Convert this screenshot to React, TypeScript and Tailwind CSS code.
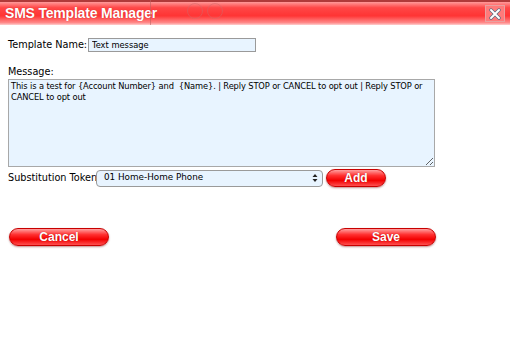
import { useState } from 'react'

function RedButton({ label, className = '' }: { label: string; className?: string }) {
  return (
    <button
      className={`h-[18px] rounded-full border border-[#c80000] text-white text-[12px] font-bold leading-none shadow-[0_1px_2px_rgba(120,0,0,.45)] bg-[linear-gradient(#ffa0a0_0%,#ff3030_35%,#f20000_65%,#ff5050_100%)] [text-shadow:0_0_1px_rgba(120,0,0,.6)] ${className}`}
      style={{ fontFamily: '"Liberation Sans", Arial, sans-serif' }}
    >
      {label}
    </button>
  )
}

export default function App() {
  const [name, setName] = useState('Text message')
  const [msg, setMsg] = useState(
    'This is a test for {Account Number} and  {Name}. | Reply STOP or CANCEL to opt out | Reply STOP or CANCEL to opt out'
  )

  return (
    <div
      className="w-[510px] h-[364px] bg-white overflow-hidden text-[9.7px] text-black"
      style={{ fontFamily: '"DejaVu Sans", Verdana, sans-serif' }}
    >
      {/* title bar */}
      <div className="relative h-[25px] border-t-2 border-[#b03a3a] bg-[linear-gradient(#ff9a9a_0%,#ff4747_25%,#ff3434_60%,#ff8a8a_90%,#ffd0d0_100%)] flex items-center pl-[5px]">
        <span
          className="text-white text-[14px] font-bold tracking-[-0.2px] [text-shadow:0_0_1px_rgba(150,0,0,.5)]"
          style={{ fontFamily: '"Liberation Sans", Arial, sans-serif' }}
        >
          SMS Template Manager
        </span>
        <div className="absolute left-[150px] top-[-2px] h-[25px] w-px bg-[#c06060] opacity-60" />
        <div className="absolute left-[187px] top-[1px] w-[16px] h-[16px] rounded-full border border-[#d06a6a] opacity-50" />
        <div className="absolute left-[207px] top-[1px] w-[16px] h-[16px] rounded-full border border-[#d06a6a] opacity-50" />
        <div className="absolute right-[5px] top-[3px] w-[20px] h-[17px] border border-[#e8a0a0] bg-[#ff7a7a] flex items-center justify-center">
          <svg width="12" height="12" viewBox="0 0 12 12">
            <path d="M2 2 L10 10 M10 2 L2 10" stroke="#5a6a80" strokeWidth="3.4" strokeLinecap="round" />
            <path d="M2 2 L10 10 M10 2 L2 10" stroke="#fff" strokeWidth="2" strokeLinecap="round" />
          </svg>
        </div>
      </div>

      <div className="pl-[8px] pt-[13px]">
        <div className="flex items-center h-[14px]">
          <span className="w-[80px] whitespace-nowrap">Template Name:</span>
          <input
            value={name}
            onChange={(e) => setName(e.target.value)}
            className="w-[168px] h-[14px] border border-[#9a9a9a] bg-[#e8f4ff] px-[3px] text-[8.3px] outline-none"
          />
        </div>

        <div className="mt-[13px] h-[13px] leading-[13px]">Message:</div>
        <textarea
          value={msg}
          onChange={(e) => setMsg(e.target.value)}
          className="block w-[427px] h-[88px] mt-[1px] border border-[#a8a8a8] bg-[#e8f4ff] px-[2px] py-[1px] text-[8.3px] tracking-[-0.12px] leading-[11px] outline-none"
        />

        <div className="flex items-center mt-[1px] h-[20px]">
          <span className="w-[88px] whitespace-nowrap">Substitution Token</span>
          <div className="w-[227px] h-[17px] rounded-[4px] border border-[#9a9a9a] bg-[#e8f4ff] flex items-center justify-between pl-[7px] pr-[4px] text-[8.8px]">
            <span>01 Home-Home Phone</span>
            <svg width="6" height="10" viewBox="0 0 6 10">
              <path d="M0.5 4 L3 1 L5.5 4 Z M0.5 6 L3 9 L5.5 6 Z" fill="#222" />
            </svg>
          </div>
          <RedButton label="Add" className="ml-[3px] w-[60px]" />
        </div>

        <div className="flex mt-[40px] pl-[1px]">
          <RedButton label="Cancel" className="w-[100px]" />
          <RedButton label="Save" className="ml-[227px] w-[100px]" />
        </div>
      </div>
    </div>
  )
}
